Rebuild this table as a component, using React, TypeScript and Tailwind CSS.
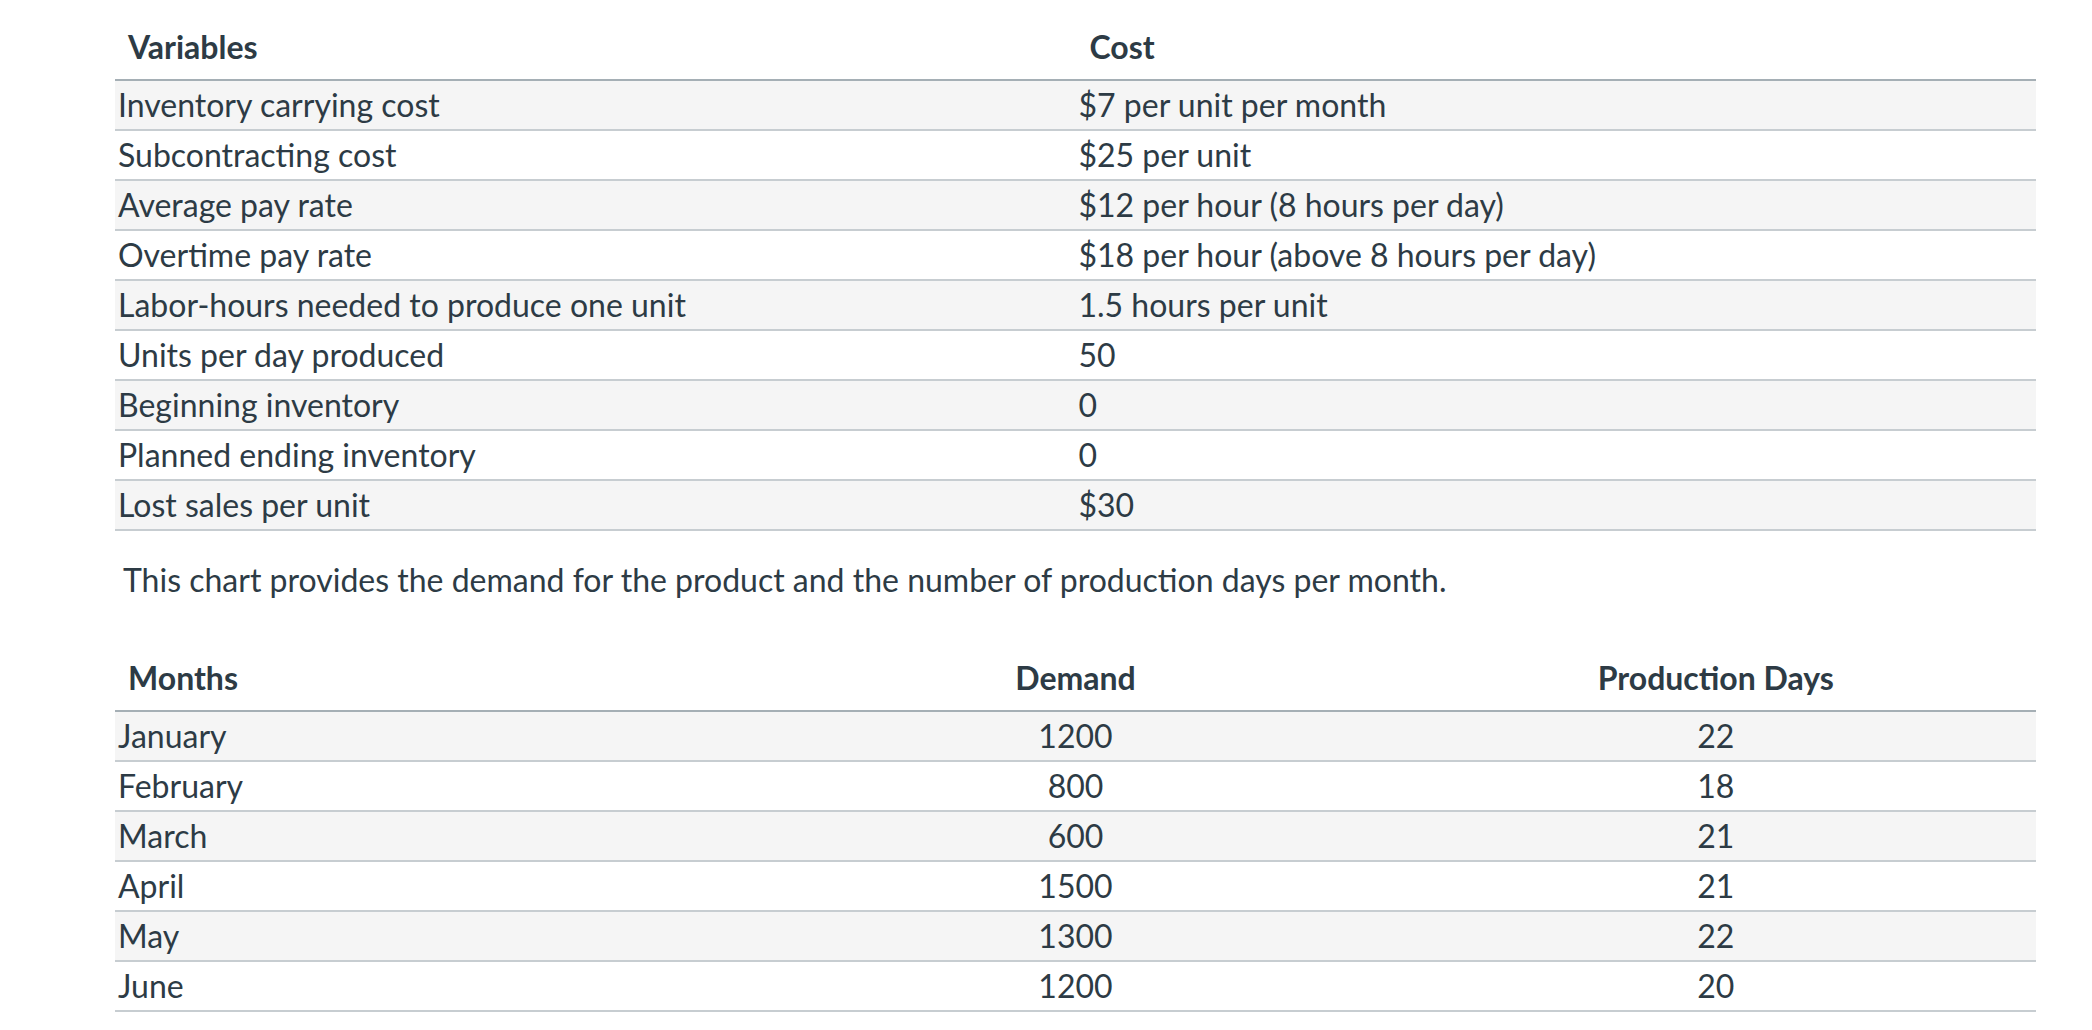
const costRows: [string, string][] = [
  ["Inventory carrying cost", "$7 per unit per month"],
  ["Subcontracting cost", "$25 per unit"],
  ["Average pay rate", "$12 per hour (8 hours per day)"],
  ["Overtime pay rate", "$18 per hour (above 8 hours per day)"],
  ["Labor-hours needed to produce one unit", "1.5 hours per unit"],
  ["Units per day produced", "50"],
  ["Beginning inventory", "0"],
  ["Planned ending inventory", "0"],
  ["Lost sales per unit", "$30"],
];

const monthRows: [string, string, string][] = [
  ["January", "1200", "22"],
  ["February", "800", "18"],
  ["March", "600", "21"],
  ["April", "1500", "21"],
  ["May", "1300", "22"],
  ["June", "1200", "20"],
];

export default function App() {
  return (
    <div
      className="min-h-[1030px] w-[2092px] bg-white pl-[115px] pt-[14px] text-[#2d3b45]"
      style={{ fontFamily: "Lato, 'Liberation Sans', sans-serif" }}
    >
      <table className="w-[1921px] table-fixed border-collapse text-[32px]">
        <thead>
          <tr className="h-[66px] border-b-2 border-[#a5afb5]">
            <th className="w-1/2 pl-[13px] text-left font-bold">Variables</th>
            <th className="w-1/2 pl-[14px] text-left font-bold">Cost</th>
          </tr>
        </thead>
        <tbody>
          {costRows.map(([label, cost], i) => (
            <tr
              key={label}
              className={`h-[50px] border-b-2 border-[#c7cdd1] ${i % 2 === 0 ? "bg-[#f5f5f5]" : "bg-white"}`}
            >
              <td className="pl-[3px] leading-[48px]">{label}</td>
              <td className="pl-[3px] leading-[48px]">{cost}</td>
            </tr>
          ))}
        </tbody>
      </table>

      <p className="mt-[29px] mb-[45px] h-[40px] pl-[8px] text-[32px] leading-[40px]">
        This chart provides the demand for the product and the number of production days per month.
      </p>

      <table className="w-[1921px] table-fixed border-collapse text-[32px]">
        <thead>
          <tr className="h-[66px] border-b-2 border-[#a5afb5]">
            <th className="pl-[13px] text-left font-bold">Months</th>
            <th className="text-center font-bold">Demand</th>
            <th className="text-center font-bold">Production Days</th>
          </tr>
        </thead>
        <tbody>
          {monthRows.map(([month, demand, days], i) => (
            <tr
              key={month}
              className={`h-[50px] border-b-2 border-[#c7cdd1] ${i % 2 === 0 ? "bg-[#f5f5f5]" : "bg-white"}`}
            >
              <td className="pl-[3px] leading-[48px]">{month}</td>
              <td className="text-center leading-[48px]">{demand}</td>
              <td className="text-center leading-[48px]">{days}</td>
            </tr>
          ))}
        </tbody>
      </table>
    </div>
  );
}
